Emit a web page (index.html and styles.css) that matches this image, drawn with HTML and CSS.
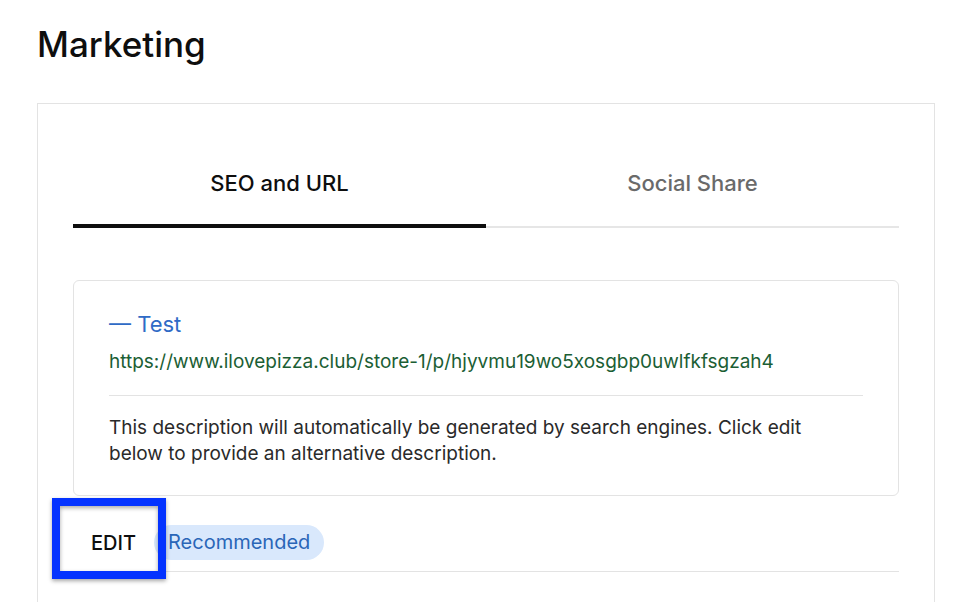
FILE: index.html
```html
<!DOCTYPE html>
<html lang="en">
<head>
  <meta charset="UTF-8">
  <meta name="viewport" content="width=device-width, initial-scale=1.0">
  <title>Marketing</title>
  <link rel="stylesheet" href="styles.css">
</head>
<body>

<main class="page">
  <h1>Marketing</h1>

  <section class="panel">
    <div class="tabs" role="tablist">
      <button class="tab active" role="tab" aria-selected="true">SEO and URL</button>
      <button class="tab" role="tab" aria-selected="false">Social Share</button>
    </div>

    <!-- Search result preview -->
    <div class="preview">
      <a class="preview-title" href="#">— Test</a>
      <div class="preview-url">https://www.ilovepizza.club/store-1/p/hjyvmu19wo5xosgbp0uwlfkfsgzah4</div>
      <p class="preview-text">This description will automatically be generated by search engines. Click edit below to provide an alternative description.</p>
    </div>

    <div class="actions">
      <button class="edit-button">EDIT</button>
      <span class="tag">Recommended</span>
      <div class="highlight"></div>
    </div>
  </section>
</main>

</body>
</html>
```
FILE: styles.css
```css
* {
  box-sizing: border-box;
}
body {
  margin: 0;
  font-family: Inter, "Liberation Sans", sans-serif;
  color: #2a2a2a;
  background-color: #fff;
}
.page {
  display: flex;
  flex-direction: column;
  min-height: 100vh;
  padding: 24px 29px 0 37px;
}
h1 {
  margin: 0 0 39px;
  font-size: 35px;
  font-weight: 500;
  line-height: 40px;
  color: #0e0e0e;
}
.panel {
  flex: 1;
  padding: 36px 35px 0;
  border: 1px solid #e3e3e3;
  border-bottom: none;
}
.tabs {
  display: flex;
  margin-bottom: 52px;
}
.tab {
  flex: 1;
  height: 88px;
  padding: 0;
  font-family: inherit;
  font-size: 22px;
  font-weight: 500;
  color: #6a6a6a;
  background: none;
  border: none;
  border-bottom: 2px solid #e6e6e6;
  cursor: pointer;
}
.tab.active {
  padding-top: 2px;
  color: #0e0e0e;
  border-bottom: 4px solid #0e0e0e;
}
.preview {
  padding: 28px 35px;
  border: 1px solid #e3e3e3;
  border-radius: 6px;
}
.preview-title {
  font-size: 22px;
  line-height: 30px;
  color: #2f6bc6;
  text-decoration: none;
}
.preview-url {
  padding: 9px 0 19px;
  font-size: 19px;
  line-height: 28px;
  color: #1b5e34;
  border-bottom: 1px solid #e3e3e3;
}
.preview-text {
  margin: 19px 0 0;
  padding-right: 40px;
  font-size: 19px;
  line-height: 26px;
}
.actions {
  position: relative;
  display: flex;
  align-items: center;
  height: 76px;
  padding-top: 18px;
  border-bottom: 1px solid #e3e3e3;
}
.edit-button {
  width: 81px;
  height: 35px;
  padding: 0;
  font-family: inherit;
  font-size: 20px;
  font-weight: 500;
  color: #0e0e0e;
  background: none;
  border: none;
  cursor: pointer;
}
.tag {
  padding: 4px 14px;
  font-size: 20px;
  line-height: 27px;
  color: #2a66b8;
  background-color: #d9e8fc;
  border-radius: 18px;
}
/* Blue box drawn over the edit button */
.highlight {
  position: absolute;
  top: 2px;
  left: -21px;
  width: 114px;
  height: 81px;
  border: 8px solid #0433ff;
  box-shadow: 0 2px 4px rgba(0, 0, 0, 0.35), inset 0 2px 4px rgba(0, 0, 0, 0.35);
  pointer-events: none;
}
```
